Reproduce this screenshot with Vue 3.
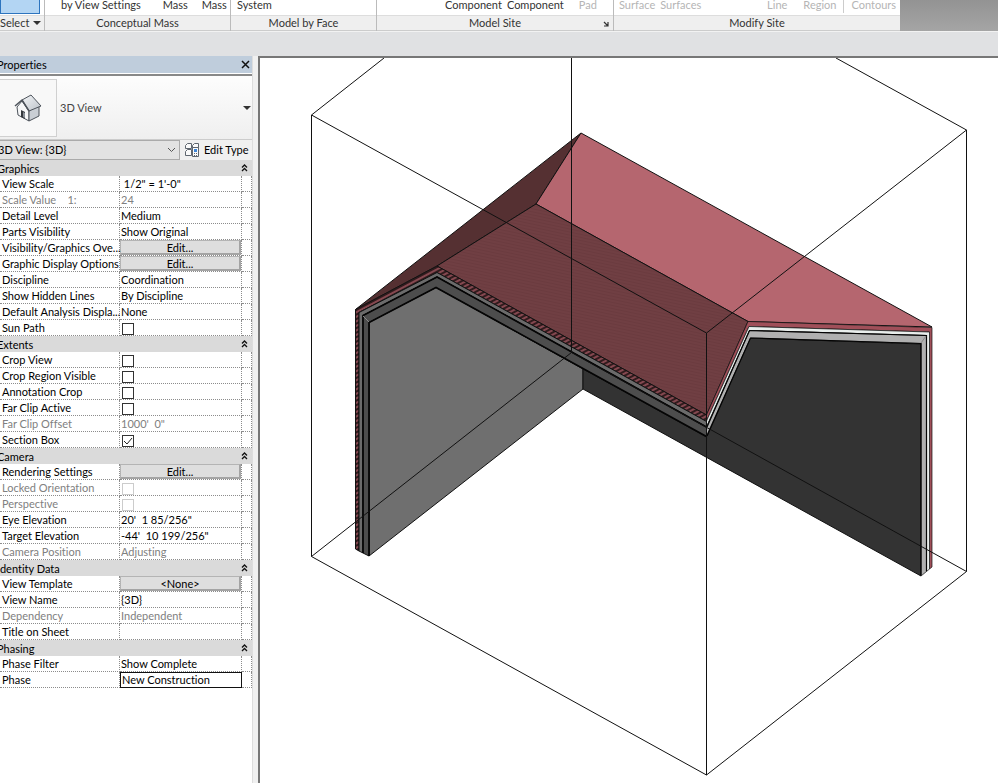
<script setup>
import { reactive } from 'vue'

const ribbon = [
  {
    key: 'mass', title: 'Conceptual Mass',
    items: [{ t: 'by View Settings' }, { t: 'Mass' }, { t: 'Mass' }]
  },
  { key: 'face', title: 'Model by Face', items: [{ t: 'System' }] },
  {
    key: 'site', title: 'Model Site', launcher: true,
    items: [{ t: 'Component' }, { t: 'Component' }, { t: 'Pad', off: true }]
  },
  {
    key: 'modify', title: 'Modify Site',
    items: [
      { t: 'Surface', off: true }, { t: 'Surfaces', off: true },
      { t: 'Line', off: true, push: true }, { t: 'Region', off: true },
      { t: 'Contours', off: true, divided: true }
    ]
  }
]

const groups = reactive([
  {
    title: 'Graphics',
    rows: [
      { label: 'View Scale', type: 'text', value: ' 1/2" = 1\'-0"' },
      { label: 'Scale Value    1:', type: 'text', value: '24', off: true },
      { label: 'Detail Level', type: 'text', value: 'Medium' },
      { label: 'Parts Visibility', type: 'text', value: 'Show Original' },
      { label: 'Visibility/Graphics Ove...', type: 'button', value: 'Edit...' },
      { label: 'Graphic Display Options', type: 'button', value: 'Edit...' },
      { label: 'Discipline', type: 'text', value: 'Coordination' },
      { label: 'Show Hidden Lines', type: 'text', value: 'By Discipline' },
      { label: 'Default Analysis Displa...', type: 'text', value: 'None' },
      { label: 'Sun Path', type: 'check', value: false }
    ]
  },
  {
    title: 'Extents',
    rows: [
      { label: 'Crop View', type: 'check', value: false },
      { label: 'Crop Region Visible', type: 'check', value: false },
      { label: 'Annotation Crop', type: 'check', value: false },
      { label: 'Far Clip Active', type: 'check', value: false },
      { label: 'Far Clip Offset', type: 'text', value: '1000\'  0"', off: true },
      { label: 'Section Box', type: 'check', value: true }
    ]
  },
  {
    title: 'Camera',
    rows: [
      { label: 'Rendering Settings', type: 'button', value: 'Edit...' },
      { label: 'Locked Orientation', type: 'check', value: false, off: true },
      { label: 'Perspective', type: 'check', value: false, off: true },
      { label: 'Eye Elevation', type: 'text', value: '20\'  1 85/256"' },
      { label: 'Target Elevation', type: 'text', value: '-44\'  10 199/256"' },
      { label: 'Camera Position', type: 'text', value: 'Adjusting', off: true }
    ]
  },
  {
    title: 'Identity Data',
    rows: [
      { label: 'View Template', type: 'button', value: '<None>' },
      { label: 'View Name', type: 'text', value: '{3D}' },
      { label: 'Dependency', type: 'text', value: 'Independent', off: true },
      { label: 'Title on Sheet', type: 'text', value: '' }
    ]
  },
  {
    title: 'Phasing',
    rows: [
      { label: 'Phase Filter', type: 'text', value: 'Show Complete' },
      { label: 'Phase', type: 'text', value: 'New Construction', active: true }
    ]
  }
])
</script>

<template>
  <div class="app">
    <header class="ribbon">
      <section class="group select">
        <div class="items"><button class="modify" aria-label="Modify"></button></div>
        <button class="caption">Select <i class="caret"></i></button>
      </section>
      <section v-for="g in ribbon" :key="g.key" class="group" :class="g.key">
        <div class="items">
          <button
            v-for="(it, i) in g.items" :key="i" :disabled="it.off"
            :class="{ push: it.push, divided: it.divided }"
          >{{ it.t }}</button>
        </div>
        <div class="caption">
          {{ g.title }}
          <svg v-if="g.launcher" class="launcher" width="6" height="6" viewBox="0 0 6 6">
            <path d="M1 1l4 4M5 1v4H1" fill="none" stroke="#333" stroke-width="1.2" />
          </svg>
        </div>
      </section>
      <div class="ribbon-rest"></div>
    </header>
    <div class="options-bar"></div>

    <main class="work">
      <aside class="palette">
        <div class="title-bar">
          <h1>Properties</h1>
          <button class="close" aria-label="Close">
            <svg width="9" height="9" viewBox="0 0 9 9"><path d="M1 1l7 7M8 1l-7 7" stroke="#111" stroke-width="1.5" /></svg>
          </button>
        </div>

        <button class="type-selector">
          <span class="thumb">
            <svg width="28" height="28" viewBox="0 0 28 28">
              <defs>
                <linearGradient id="roof" x1="0" y1="0" x2="1" y2="1">
                  <stop offset="0" stop-color="#f4f6f8" /><stop offset="1" stop-color="#bcc2c9" />
                </linearGradient>
              </defs>
              <path d="M3 13L8 7l7 10v10l-11-6z" fill="#f6f7f8" stroke="#4d535b" stroke-linejoin="round" />
              <path d="M15 17v10l10-5V11z" fill="#c9ced4" stroke="#4d535b" stroke-linejoin="round" />
              <path d="M8 6L17 1l10 11-12 5z" fill="url(#roof)" stroke="#4d535b" stroke-linejoin="round" />
              <path d="M1 12l7-6 7 11" fill="none" stroke="#4d535b" stroke-width="1.5" stroke-linejoin="round" />
              <path d="M7 16l4 2v7l-4-2z" fill="#35393e" />
              <path d="M9 18l2 1v5l-2-1z" fill="#8a9097" />
            </svg>
          </span>
          <span class="type-name">3D View</span>
          <i class="caret"></i>
        </button>

        <div class="instance">
          <div class="picker">
            <select aria-label="View instance"><option>3D View: {3D}</option></select>
            <svg class="chevron" width="9" height="6" viewBox="0 0 9 6"><path d="M1 1l3.500 3.500L8 1" fill="none" stroke="#555" /></svg>
          </div>
          <button class="edit-type">
            <svg width="16" height="16" viewBox="0 0 16 16">
              <g fill="#fafafa" stroke="#5f666f">
                <path d="M1.500 3.500l2-2h4v5h-6zM8.500 3.500l2-2h4v5h-6z" />
                <path d="M1.500 9.500l2-2h4v6h-6z" />
                <path d="M8.500 5.500h6v9h-6z" />
              </g>
              <path d="M10 7h3v3h-3z" fill="#3f86d8" />
              <path d="M10 11.500h1m1 0h1M10 13.500h1m1 0h1" stroke="#5f666f" />
            </svg>
            Edit Type
          </button>
        </div>

        <table>
          <colgroup><col class="c-name"><col class="c-value"><col class="c-link"></colgroup>
          <tbody v-for="(g, gi) in groups" :key="g.title">
            <tr class="head">
              <th colspan="3" scope="colgroup">
                <div class="head-line">
                  <span>{{ g.title }}</span>
                  <svg width="7" height="8" viewBox="0 0 7 8"><path d="M1 3.500L3.500 1 6 3.500M1 7l2.500-2.500L6 7" fill="none" stroke="#111" stroke-width="1.300" /></svg>
                </div>
              </th>
            </tr>
            <tr v-for="(r, ri) in g.rows" :key="r.label" :class="{ off: r.off }">
              <td class="name"><label :for="`p${gi}-${ri}`">{{ r.label }}</label></td>
              <td class="value" :class="{ active: r.active }">
                <button v-if="r.type === 'button'" :id="`p${gi}-${ri}`">{{ r.value }}</button>
                <input v-else-if="r.type === 'check'" :id="`p${gi}-${ri}`" v-model="r.value" type="checkbox" :disabled="r.off">
                <input v-else :id="`p${gi}-${ri}`" v-model="r.value" type="text" :disabled="r.off">
              </td>
              <td></td>
            </tr>
          </tbody>
        </table>
      </aside>

      <section class="viewport">
        <svg viewBox="260 58 738 725" role="img" aria-label="3D building section">
          <defs>
            <pattern id="brick" width="3" height="3" patternUnits="userSpaceOnUse" patternTransform="rotate(12)">
              <rect width="3" height="3" fill="#703f43" /><rect width="3" height="1" fill="#6b3b3f" />
            </pattern>
            <pattern id="hatch" width="4" height="4" patternUnits="userSpaceOnUse" patternTransform="rotate(-28)">
              <rect width="4" height="4" fill="#854850" /><rect width="4" height="2" fill="#311b1d" />
            </pattern>
          </defs>

          <g stroke="#111" stroke-linejoin="round">
            <path d="M355.500 309.500L581 133 536 204 437 266z" fill="#553032" />
            <path d="M581 133L932 327 748 321.500 536 204z" fill="#b5666f" />
            <path d="M437 266L536 204 748 321.500 706.500 415z" fill="url(#brick)" />

            <path d="M369 322L436 287 583 369V389L369 556z" fill="#6f6f6f" />
            <path d="M583 369L707 436 750 338 921 344V576L583 389z" fill="#333" />

            <path d="M355.500 309.500L437 266 706.500 415V421.500L437 272.500 359 312.500V551L355.500 549z" fill="url(#hatch)" />
            <path d="M359 312.500L437 272.500 706.500 421.500V427L437 277 363 315.500V553L359 551z" fill="#6b6b6b" />
            <path d="M363 315.500L437 277 706.500 427V437L436 287.500 369 322.500V556L363 553z" fill="#4d4d4d" />
          </g>
          <g stroke="#111" stroke-width="0.700" stroke-linejoin="round">
            <path d="M706.500 415L748 321.500 932 327.500V567L929.500 569V332L749 326.500 706.500 421z" fill="#a04f59" />
            <path d="M706.500 421L749 326.500 929.500 332V569L926.500 571.500V335.500L749.500 330.500 706.500 427z" fill="#e9eeec" />
            <path d="M706.500 427L749.500 330.500 926.500 335.500V571.500L921 576V343.500L750.500 338 706.500 436z" fill="#b0b0b0" />
          </g>
          <g fill="none" stroke="#050505" stroke-width="1.600" stroke-linejoin="miter">
            <path d="M363 553V315.500L437 277 706.500 427" />
            <path d="M369 556V322.500L436 287.500 706.500 436.500" />
            <path d="M707 427L749.500 330.500 926.500 335.500V571" stroke-width="1.200" />
            <path d="M707 436L750.500 338 921 343.500V575" stroke-width="1.200" />
          </g>
          <path d="M363 316L369 322M921 343L926 336" stroke="#888" />

          <g fill="none" stroke="#111">
            <path d="M384 58L311.500 115 706.500 333 966.500 130 836 58" />
            <path d="M311.500 115V556.500L706.500 775 966.500 571.500V130" />
            <path d="M706.500 333V775M571.500 58V352.500" />
            <path d="M311.500 556.500L571.500 352.500 966.500 571.500" />
          </g>
        </svg>
      </section>
    </main>
  </div>
</template>

<style>
body { margin: 0; background: #f0f0f0; }
</style>

<style scoped>
.app {
  display: flex; flex-direction: column; min-height: 100vh;
  font: 11px/16px Lato, "Open Sans", sans-serif; font-variant-ligatures: none; color: #000;
}
* { box-sizing: border-box; }
button, input, select { font: inherit; font-variant-ligatures: none; color: inherit; margin: 0; padding: 0; border: 0; background: none; }
.caret { display: inline-block; border: 4px solid transparent; border-top-color: #333; border-bottom: 0; }

.ribbon { display: flex; height: 32px; border-bottom: 1px solid #f2f2f2; color: #333; }
.group { display: flex; flex-direction: column; flex: none; background: #fff; border-right: 1px solid #bbb; }
.group.select { width: 45px; }
.group.mass { width: 186px; }
.group.face { width: 146px; }
.group.site { width: 237px; }
.group.modify { width: 286px; border-right: 0; }
.items { display: flex; align-items: flex-start; height: 15px; line-height: 10px; white-space: nowrap; }
.items button:disabled { color: #b5b5b5; }
.items .modify { width: 40px; height: 14px; flex: none; background: #b3d5f3; border: 1px solid #2d74be; border-top: 0; }
.mass .items { padding-left: 16px; gap: 14px; }
.mass .items button:first-child { margin-right: 8px; }
.face .items { padding-left: 6px; }
.site .items { padding-left: 68px; gap: 5px; }
.site .items button:last-child { margin-left: 10px; }
.modify .items { padding: 0 4px 0 5px; gap: 5px; }
.items .push { margin-left: auto; margin-right: 11px; }
.items .divided { height: 13px; padding: 0 0 3px 7px; margin-left: 2px; border-left: 1px solid #ccc; }
.caption {
  display: flex; align-items: center; justify-content: center; position: relative;
  height: 16px; background: #efefef; border-top: 1px solid #ddd; border-bottom: 1px solid #ccc;
}
.select .caption { justify-content: flex-start; gap: 4px; }
.launcher { position: absolute; right: 4px; top: 5px; }
.ribbon-rest { flex: 1; background: linear-gradient(#939393, #a5a5a5); }
.options-bar { height: 24px; background: #e0e1e3; }

.work { display: flex; flex: 1; }
.palette { width: 253px; flex: none; margin-right: 5px; background: #fff; border-right: 1px solid #ddd; }
.title-bar { display: flex; align-items: center; justify-content: space-between; height: 17px; background: #bfcddc; padding-right: 2px; }
.title-bar h1 { margin: 0 0 0 -3px; font: inherit; }
.close { display: flex; }
.type-selector {
  display: flex; align-items: center; width: 100%; height: 66px; padding-right: 1px;
  border-top: 2px solid #888; border-bottom: 1px solid #ccc; background: linear-gradient(#fdfdfd, #efefef); color: #444; text-align: left;
  margin-top: 1px;
}
.thumb { display: flex; align-items: center; justify-content: center; width: 57px; height: 58px; border: 1px solid #d0d0d0; border-left: 0; background: #f8f8f8; }
.type-name { flex: 1; padding-left: 3px; }
.instance { display: flex; align-items: center; height: 20px; background: #f0f0f0; }
.picker { display: grid; align-items: center; width: 180px; flex: none; }
.picker > * { grid-area: 1 / 1; }
.picker select { appearance: none; width: 100%; height: 20px; text-indent: -2px; background: #e2e2e2; border: 1px solid #aaa; border-left: 0; }
.chevron { justify-self: end; margin-right: 4px; pointer-events: none; }
.edit-type { display: flex; align-items: center; gap: 4px; margin-left: 4px; white-space: nowrap; }

table { table-layout: fixed; width: 100%; border-collapse: separate; border-spacing: 0; background: #fff; }
.c-name { width: 120px; }
.c-value { width: 122px; }
td, th { height: 16px; padding: 0; line-height: 15px; font-weight: normal; }
td { border-bottom: 1px dotted #8c8c8c; border-right: 1px dotted #8c8c8c; }
th { background: #dadada; text-align: left; }
.head-line { display: flex; align-items: center; justify-content: space-between; height: 16px; margin-left: -3px; padding-right: 4px; }
.name { padding-left: 2px; white-space: pre; }
.name label { display: block; height: 15px; }
.value > * { display: block; }
.value input[type="text"] { width: 100%; height: 15px; padding-left: 1px; line-height: 15px; }
.value button { width: 100%; height: 15px; padding-top: 2px; line-height: 10px; background: #dedede; border: 1px solid #b4b4b4; border-right: 2px solid #a4a4a4; border-bottom: 2px solid #a4a4a4; }
.value input[type="checkbox"] { appearance: none; width: 12px; height: 12px; margin: 3px 0 0 2px; border: 1px solid #333; background: #fff center / 10px 10px no-repeat; }
.value input[type="checkbox"]:checked { background-image: url("data:image/svg+xml,%3Csvg xmlns='http://www.w3.org/2000/svg' viewBox='0 0 10 10'%3E%3Cpath d='M1 5l3 3 5-6' fill='none' stroke='%23222'/%3E%3C/svg%3E"); }
.value input[type="checkbox"]:disabled { border-color: #ccc; }
.value.active { border: 1px solid #111; }
.value.active input[type="text"] { height: 14px; line-height: 14px; }
.off, .off input { color: #808080; }

.viewport { flex: 1; min-width: 0; background: #fff; border-left: 2px solid #777; border-top: 2px solid #777; }
.viewport svg { display: block; width: 100%; height: auto; }
</style>
